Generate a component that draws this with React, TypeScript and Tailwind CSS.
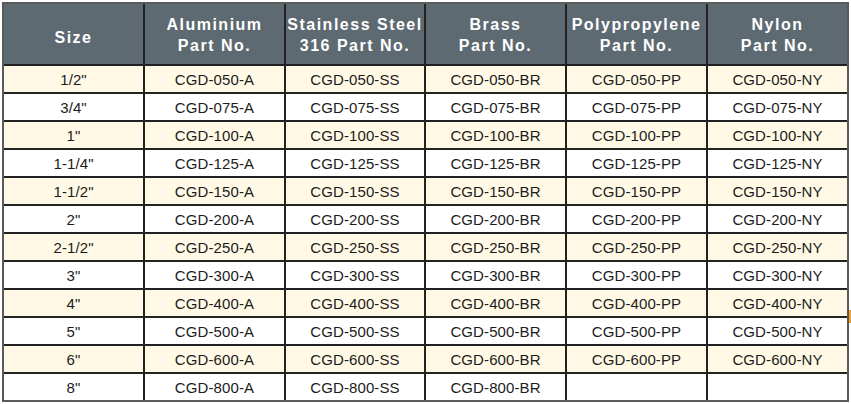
const headers = [
  ['Size'],
  ['Aluminium', 'Part No.'],
  ['Stainless Steel', '316 Part No.'],
  ['Brass', 'Part No.'],
  ['Polypropylene', 'Part No.'],
  ['Nylon', 'Part No.'],
]

const sizes: [string, string][] = [
  ['1/2"', '050'],
  ['3/4"', '075'],
  ['1"', '100'],
  ['1-1/4"', '125'],
  ['1-1/2"', '150'],
  ['2"', '200'],
  ['2-1/2"', '250'],
  ['3"', '300'],
  ['4"', '400'],
  ['5"', '500'],
  ['6"', '600'],
  ['8"', '800'],
]

const suffixes = ['A', 'SS', 'BR', 'PP', 'NY']

const App = () => {
  return (
    <div className="relative h-[404px] w-[851px] bg-white font-['Liberation_Sans',Arial,sans-serif]">
      <div className="ml-[2px] pt-[2px]">
        <div className="w-[847px] border-2 border-[#5a5a5a] bg-[#222]">
          <div className="grid grid-cols-[139px_139px_138px_139px_139px_139px] grid-rows-[60px] auto-rows-[26px] gap-[2px]">
            {headers.map((lines, i) => (
              <div
                key={i}
                className={`flex flex-col items-center justify-center bg-[#5e6a71] text-[16px] font-bold leading-[21px] tracking-[1.5px] text-white ${
                  lines.length === 1 ? 'pt-[7px]' : 'pt-[2px]'
                }`}
              >
                {lines.map((l) => (
                  <span key={l}>{l}</span>
                ))}
              </div>
            ))}
            {sizes.map(([size, code], r) => {
              const bg = r % 2 === 0 ? 'bg-[#fff9e6]' : 'bg-white'
              const cells = [size, ...suffixes.map((s) => (code === '800' && (s === 'PP' || s === 'NY') ? '' : `CGD-${code}-${s}`))]
              return cells.map((c, i) => (
                <div
                  key={`${r}-${i}`}
                  className={`${bg} flex items-center justify-center pt-[2px] text-[15px] tracking-[0.1px] text-[#1c1c1c]`}
                >
                  {c}
                </div>
              ))
            })}
          </div>
        </div>
      </div>
      <div className="absolute left-[849px] top-[310px] h-[13px] w-[2px] bg-[#f0a030]" />
    </div>
  )
}

export default App
